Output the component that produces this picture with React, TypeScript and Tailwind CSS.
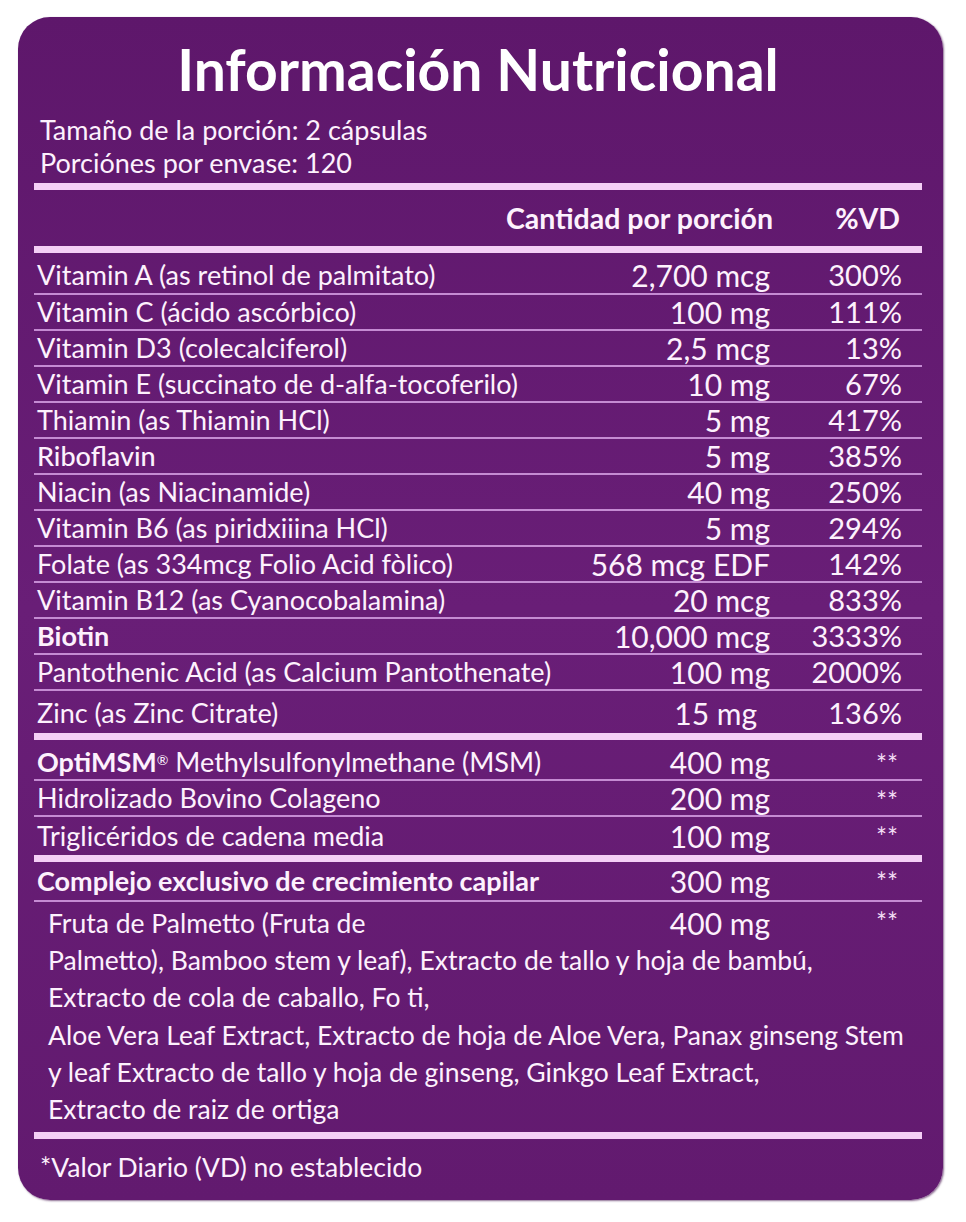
import React from 'react';

type Row = {
  name: React.ReactNode;
  amount: string;
  dv: string;
  h: string;
  amountPad?: string;
  last?: boolean;
};

const vitamins: Row[] = [
  { name: 'Vitamin A (as retinol de palmitato)', amount: '2,700 mcg', dv: '300%', h: 'h-[42px] pt-[3px]' },
  { name: 'Vitamin C (ácido ascórbico)', amount: '100 mg', dv: '111%', h: 'h-[36px]' },
  { name: 'Vitamin D3 (colecalciferol)', amount: '2,5 mcg', dv: '13%', h: 'h-[36px]' },
  { name: 'Vitamin E (succinato de d-alfa-tocoferilo)', amount: '10 mg', dv: '67%', h: 'h-[36px]' },
  { name: 'Thiamin (as Thiamin HCl)', amount: '5 mg', dv: '417%', h: 'h-[36px]' },
  { name: <span className="font-medium">Riboflavin</span>, amount: '5 mg', dv: '385%', h: 'h-[36px]' },
  { name: 'Niacin (as Niacinamide)', amount: '40 mg', dv: '250%', h: 'h-[36px]' },
  { name: 'Vitamin B6 (as piridxiiina HCl)', amount: '5 mg', dv: '294%', h: 'h-[36px]' },
  { name: 'Folate (as 334mcg Folio Acid fòlico)', amount: '568 mcg EDF', dv: '142%', h: 'h-[36px]' },
  { name: 'Vitamin B12 (as Cyanocobalamina)', amount: '20 mcg', dv: '833%', h: 'h-[36px]' },
  { name: <span className="font-bold">Biotin</span>, amount: '10,000 mcg', dv: '3333%', h: 'h-[36px]' },
  { name: 'Pantothenic Acid (as Calcium Pantothenate)', amount: '100 mg', dv: '2000%', h: 'h-[36px]' },
  { name: 'Zinc (as Zinc Citrate)', amount: '15 mg', dv: '136%', h: 'h-[42px] pt-[2px]', amountPad: 'pr-[13px]', last: true },
];

const others: Row[] = [
  {
    name: (
      <>
        <span className="font-bold">OptiMSM</span>
        <sup className="text-[14px]">®</sup> Methylsulfonylmethane (MSM)
      </>
    ),
    amount: '400 mg',
    dv: '**',
    h: 'h-[41px] pt-[4px]',
  },
  { name: 'Hidrolizado Bovino Colageno', amount: '200 mg', dv: '**', h: 'h-[36px]' },
  { name: 'Triglicéridos de cadena media', amount: '100 mg', dv: '**', h: 'h-[38px]', last: true },
];

const ThickLine = () => <div className="h-[7px] bg-[#f4cff6]" />;

const Stars = ({ top = 'pt-[7px]' }: { top?: string }) => (
  <span className={`self-start pr-[4px] text-[26px] leading-none text-[#f3def5] ${top}`}>**</span>
);

const NutrientRow = ({ row }: { row: Row }) => (
  <div className={`flex items-center leading-[30px] ${row.h} ${row.last ? '' : 'border-b-2 border-[#c58bd3]'}`}>
    <div className="min-w-0 flex-1 pl-[3px] text-[27px] whitespace-nowrap">{row.name}</div>
    <div className={`w-[300px] shrink-0 text-right text-[30px] whitespace-nowrap ${row.amountPad ?? ''}`}>
      {row.amount}
    </div>
    <div className="flex w-[132px] shrink-0 justify-end self-stretch items-center text-[29px]">
      {row.dv === '**' ? <Stars /> : row.dv}
    </div>
    <div className="w-[20px] shrink-0" />
  </div>
);

export default function App() {
  return (
    <div className="min-h-[1222px] bg-white pt-[17px] pl-[18px] font-['Lato','Noto_Sans',sans-serif]">
      <div className="h-[1183px] w-[925px] rounded-[32px] bg-gradient-to-b from-[#5e176b] via-[#691e77] to-[#621a6f] pr-[21px] pl-[16px] text-[#fdf1fd] shadow-[1px_1px_2px_rgba(60,10,70,0.6)]">
        {/* Title */}
        <h1 className="pt-[24px] text-center text-[57px] leading-[57px] font-bold text-white">
          Información Nutricional
        </h1>
        <div className="mt-[15px] pl-[6px] text-[27px] leading-[33px]">
          <div>Tamaño de la porción: 2 cápsulas</div>
          <div>Porciónes por envase: 120</div>
        </div>

        <div className="mt-[4px]">
          <ThickLine />
        </div>

        {/* Column header */}
        <div className="flex h-[56px] items-center text-[28.5px] font-bold">
          <div className="flex-1" />
          <div className="text-right">Cantidad por porción</div>
          <div className="w-[127px] text-right">%VD</div>
          <div className="w-[22px]" />
        </div>
        <ThickLine />

        {/* Vitamins */}
        <div>
          {vitamins.map((r, i) => (
            <NutrientRow key={i} row={r} />
          ))}
        </div>
        <ThickLine />

        {/* Others */}
        <div>
          {others.map((r, i) => (
            <NutrientRow key={i} row={r} />
          ))}
        </div>
        <ThickLine />

        {/* Hair complex */}
        <div>
          <div className="flex h-[40px] items-center border-b-2 border-[#c58bd3] leading-[30px]">
            <div className="min-w-0 flex-1 pl-[3px] text-[27px] font-bold whitespace-nowrap">
              Complejo exclusivo de crecimiento capilar
            </div>
            <div className="w-[200px] shrink-0 text-right text-[30px]">300 mg</div>
            <div className="flex w-[132px] shrink-0 justify-end self-stretch items-center">
              <Stars />
            </div>
            <div className="w-[20px] shrink-0" />
          </div>
          <div className="pt-[3px] pb-[4px] pl-[14px] text-[26.5px] leading-[37.2px]">
            <div className="flex">
              <div className="min-w-0 flex-1">Fruta de Palmetto (Fruta de</div>
              <div className="w-[200px] shrink-0 text-right text-[30px]">400 mg</div>
              <div className="flex w-[132px] shrink-0 justify-end">
                <Stars top="pt-[4px]" />
              </div>
              <div className="w-[20px] shrink-0" />
            </div>
            <div>Palmetto), Bamboo stem y leaf), Extracto de tallo y hoja de bambú,</div>
            <div>Extracto de cola de caballo, Fo ti,</div>
            <div className="whitespace-nowrap">Aloe Vera Leaf Extract, Extracto de hoja de Aloe Vera, Panax ginseng Stem</div>
            <div>y leaf Extracto de tallo y hoja de ginseng, Ginkgo Leaf Extract,</div>
            <div>Extracto de raiz de ortiga</div>
          </div>
        </div>
        <ThickLine />

        <div className="pt-[9px] pl-[6px] text-[26.5px]">*Valor Diario (VD) no establecido</div>
      </div>
    </div>
  );
}
